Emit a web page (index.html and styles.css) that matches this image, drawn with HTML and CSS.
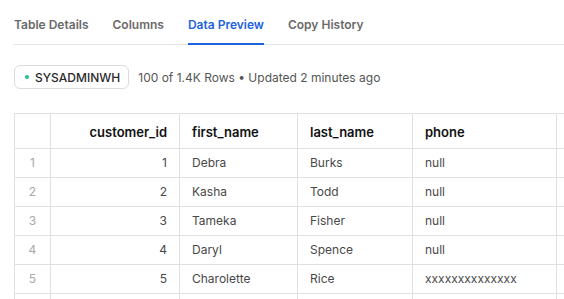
FILE: index.html
```html
<!DOCTYPE html>
<html lang="en">
<head>
<meta charset="utf-8">
<title>Data Preview</title>
<link rel="stylesheet" href="styles.css">
</head>
<body>
<div class="page">
  <nav class="tabs">
    <span class="tab">Table Details</span>
    <span class="tab">Columns</span>
    <span class="tab active">Data Preview</span>
    <span class="tab">Copy History</span>
  </nav>
  <div class="meta">
    <span class="badge"><span class="dot"></span>SYSADMINWH</span>
    <span class="info">100 of 1.4K Rows • Updated 2 minutes ago</span>
  </div>
  <div class="grid">
    <div class="c h"></div>
    <div class="c h num">customer_id</div>
    <div class="c h">first_name</div>
    <div class="c h">last_name</div>
    <div class="c h">phone</div>
    <div class="c h"></div>

    <div class="c idx">1</div><div class="c num">1</div><div class="c">Debra</div><div class="c">Burks</div><div class="c">null</div><div class="c"></div>
    <div class="c idx">2</div><div class="c num">2</div><div class="c">Kasha</div><div class="c">Todd</div><div class="c">null</div><div class="c"></div>
    <div class="c idx">3</div><div class="c num">3</div><div class="c">Tameka</div><div class="c">Fisher</div><div class="c">null</div><div class="c"></div>
    <div class="c idx">4</div><div class="c num">4</div><div class="c">Daryl</div><div class="c">Spence</div><div class="c">null</div><div class="c"></div>
    <div class="c idx">5</div><div class="c num">5</div><div class="c">Charolette</div><div class="c">Rice</div><div class="c">xxxxxxxxxxxxxx</div><div class="c"></div>
    <div class="c idx"></div><div class="c num"></div><div class="c"></div><div class="c"></div><div class="c"></div><div class="c"></div>
  </div>
</div>
</body>
</html>
```
FILE: styles.css
```css
html, body {
  margin: 0;
  padding: 0;
  background: #ffffff;
}
body {
  font-family: Inter, "Noto Sans", "Liberation Sans", sans-serif;
  color: #333;
  width: 564px;
  height: 299px;
  overflow: hidden;
}
.page {
  padding-left: 14px;
  overflow: hidden;
}
.tabs {
  display: flex;
  gap: 24px;
  border-bottom: 1px solid #e3e3e3;
}
.tab {
  padding: 17px 0 10px;
  line-height: 16px;
  font-size: 12px;
  font-weight: 600;
  color: #6a6a6a;
  border-bottom: 2px solid transparent;
  margin-bottom: -1px;
  white-space: nowrap;
}
.tab.active {
  color: #1d63dd;
  border-bottom-color: #1d63dd;
}
.meta {
  display: flex;
  align-items: center;
  gap: 9px;
  margin-top: 20px;
}
.badge {
  display: inline-flex;
  align-items: center;
  box-sizing: border-box;
  height: 24px;
  padding: 0 8px 0 10px;
  border: 1px solid #dcdcdc;
  border-radius: 6px;
  font-size: 12px;
  font-weight: 500;
  color: #2a2a2a;
}
.dot {
  width: 4px;
  height: 4px;
  border-radius: 50%;
  background: #1fc184;
  margin-right: 6px;
}
.info {
  font-size: 12px;
  color: #555;
}
.grid {
  display: grid;
  grid-template-columns: 36px 129px 118px 115px 144px 120px;
  margin-top: 24px;
  border-top: 1px solid #e0e0e0;
  border-left: 1px solid #e0e0e0;
  width: max-content;
}
.c {
  border-right: 1px solid #e0e0e0;
  border-bottom: 1px solid #e0e0e0;
  padding: 6px 12px;
  height: 16px;
  line-height: 16px;
  font-size: 12px;
  color: #484848;
  white-space: nowrap;
  overflow: hidden;
}
.c.h {
  padding-top: 10px;
  padding-bottom: 8px;
  font-size: 13px;
  font-weight: 600;
  color: #111;
}
.num {
  text-align: right;
}
.idx {
  padding: 6px 0;
  text-align: center;
  color: #a8a8a8;
}
```
